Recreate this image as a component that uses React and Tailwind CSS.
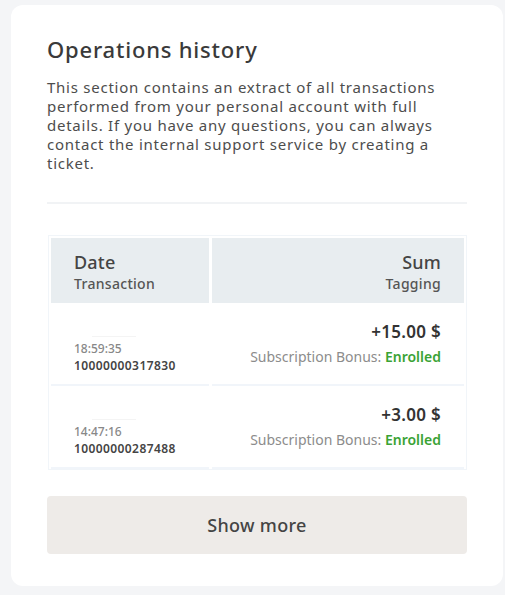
const rows = [
  { time: "18:59:35", id: "10000000317830", sum: "+15.00 $" },
  { time: "14:47:16", id: "10000000287488", sum: "+3.00 $" },
];

export default function App() {
  return (
    <div
      className="min-h-[595px] bg-[#f4f5f7] pl-[11px] pr-[2px] pt-[5px] pb-[10px]"
      style={{ fontFamily: '"Noto Sans", "Open Sans", sans-serif' }}
    >
      <div className="bg-white rounded-[12px] px-[36px] pt-[30px] pb-[32px]">
        <h1 className="text-[22px] leading-[28px] font-medium text-[#3a3a3a] tracking-[0.8px]">
          Operations history
        </h1>
        <p className="mt-[15px] text-[15px] leading-[19px] text-[#4d4d4d] tracking-[0.75px] pr-[6px]">
          This section contains an extract of all transactions performed from
          your personal account with full details. If you have any questions,
          you can always contact the internal support service by creating a
          ticket.
        </p>
        <div className="mt-[29px] h-[2px] bg-[#f1f3f5]" />

        <div className="mt-[31px] ml-[1px] border-[1px] border-[#f1f5f9] p-[2px] pb-0">
          <div className="grid grid-cols-[158px_1fr] gap-x-[3px]">
            <div className="bg-[#e8edf0] h-[65px] pl-[23px] pt-[13px]">
              <div className="text-[18px] leading-[22px] font-medium text-[#444] tracking-[0.2px]">
                Date
              </div>
              <div className="mt-[2px] text-[14px] leading-[18px] font-medium text-[#555] tracking-[0.3px]">
                Transaction
              </div>
            </div>
            <div className="bg-[#e8edf0] h-[65px] pr-[23px] pt-[13px] text-right">
              <div className="text-[18px] leading-[22px] font-medium text-[#444] tracking-[0.2px]">
                Sum
              </div>
              <div className="mt-[2px] text-[14px] leading-[18px] font-medium text-[#555] tracking-[0.3px]">
                Tagging
              </div>
            </div>

            {rows.map((r) => (
              <div key={r.id} className="contents">
                <div className="h-[83px] border-b-[2px] border-[#f1f5fa] pl-[23px] pt-[33px]">
                  <div className="ml-[18px] w-[44px] h-px bg-[#f4f4f4]" />
                  <div className="mt-[4px] text-[12px] leading-[15px] font-medium text-[#888]">
                    {r.time}
                  </div>
                  <div className="mt-[2px] text-[12px] leading-[15px] font-semibold text-[#444] tracking-[0.4px]">
                    {r.id}
                  </div>
                </div>
                <div className="h-[83px] border-b-[2px] border-[#f1f5fa] pr-[23px] pt-[19px] text-right">
                  <div className="text-[17px] leading-[20px] font-semibold text-[#333] tracking-[0.3px]">
                    {r.sum}
                  </div>
                  <div className="mt-[6px] text-[14px] leading-[18px] text-[#8c8c8c]">
                    Subscription Bonus:{" "}
                    <span className="font-semibold text-[#3aa335]">Enrolled</span>
                  </div>
                </div>
              </div>
            ))}
          </div>
        </div>

        <button className="mt-[26px] w-full h-[58px] rounded-[4px] bg-[#eeebe8] text-[18px] font-medium text-[#444] tracking-[0.3px]">
          Show more
        </button>
      </div>
    </div>
  );
}
